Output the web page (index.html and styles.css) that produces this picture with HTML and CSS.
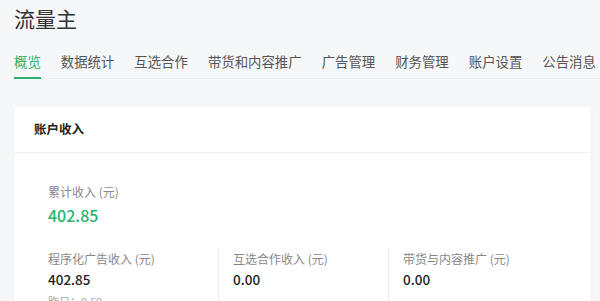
FILE: index.html
```html
<!DOCTYPE html>
<html lang="zh">
<head>
<meta charset="utf-8">
<link rel="stylesheet" href="styles.css">
</head>
<body>
<div class="page">
  <h1 class="title">流量主</h1>
  <nav class="tabs">
    <a class="tab active">概览</a>
    <a class="tab">数据统计</a>
    <a class="tab">互选合作</a>
    <a class="tab">带货和内容推广</a>
    <a class="tab">广告管理</a>
    <a class="tab">财务管理</a>
    <a class="tab">账户设置</a>
    <a class="tab">公告消息</a>
  </nav>
  <section class="card">
    <div class="card-head">账户收入</div>
    <div class="card-body">
      <div class="total">
        <div class="label">累计收入 (元)</div>
        <div class="total-value">402.85</div>
      </div>
      <div class="cols">
        <div class="col">
          <div class="label">程序化广告收入 (元)</div>
          <div class="value">402.85</div>
          <div class="sub">昨日：0.59</div>
        </div>
        <div class="col">
          <div class="label">互选合作收入 (元)</div>
          <div class="value">0.00</div>
        </div>
        <div class="col">
          <div class="label">带货与内容推广 (元)</div>
          <div class="value">0.00</div>
        </div>
      </div>
    </div>
  </section>
</div>
</body>
</html>
```
FILE: styles.css
```css
html, body {
  margin: 0;
  padding: 0;
  background: #f6f7f9;
  overflow: hidden;
}
body {
  font-family: "Noto Sans CJK SC", "Noto Sans", sans-serif;
  color: #333;
}
.page {
  padding: 4px 9px 0 14px;
}
.title {
  margin: 0;
  font-size: 21px;
  line-height: 28px;
  font-weight: 400;
  color: #333;
}
.tabs {
  margin-top: 19px;
  display: flex;
  gap: 20px;
  white-space: nowrap;
  border-bottom: 1px solid #ebecee;
  margin-right: -9px;
}
.tab {
  font-size: 13.4px;
  line-height: 20px;
  padding-bottom: 6px;
  border-bottom: 2px solid transparent;
  margin-bottom: -1px;
  color: #555;
  flex: none;
}
.tab.active {
  color: #27b36f;
  border-bottom-color: #27b36f;
}
.card {
  margin-top: 27px;
  background: #fff;
  border-radius: 4px;
  box-shadow: 0 0 3px rgba(0,0,0,0.06);
  height: 300px;
}
.card-head {
  height: 46px;
  line-height: 46px;
  padding-left: 20px;
  font-size: 12.5px;
  font-weight: 700;
  color: #222;
  border-bottom: 1px solid #eeeff1;
}
.card-body {
  padding: 30px 0 0 34px;
}
.label {
  font-size: 12px;
  line-height: 18px;
  color: #888;
}
.total-value {
  font-size: 16px;
  line-height: 24px;
  font-weight: 500;
  color: #27b36f;
  margin-top: 2px;
}
.cols {
  display: grid;
  grid-template-columns: 170px 170px 170px;
  margin-top: 21px;
}
.col {
  padding: 2px 0 0 14px;
  border-left: 1px solid #eeeff1;
}
.col:first-child {
  padding-left: 0;
  border-left: none;
}
.value {
  font-size: 13.5px;
  line-height: 20px;
  font-weight: 500;
  color: #222;
  margin-top: 1px;
}
.sub {
  font-size: 11px;
  line-height: 16px;
  color: #aaa;
  margin-top: 4px;
}
```
